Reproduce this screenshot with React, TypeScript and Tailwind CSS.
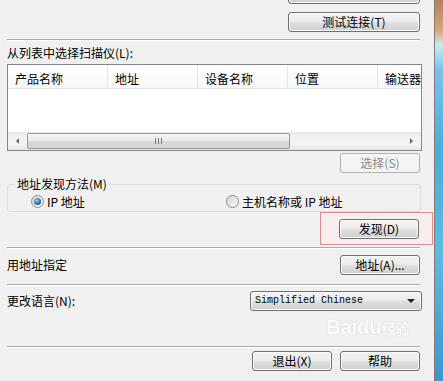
import React from 'react'

const face =
  'h-[20px] rounded-[3px] border border-[#707070] bg-[linear-gradient(#f3f3f3,#ececec_45%,#dedede_55%,#d0d0d0)] shadow-[inset_0_0_0_1px_#fbfbfb] text-black'

function Btn({ children, w = 'w-[80px]' }: { children: React.ReactNode; w?: string }) {
  return <div className={`flex items-center justify-center ${face} ${w}`}>{children}</div>
}

function Sep({ className = '' }: { className?: string }) {
  return <div className={`w-[413px] h-px bg-[#a9a9a9] shadow-[0_1px_0_#ffffff] ${className}`} />
}

function Radio({ checked }: { checked?: boolean }) {
  return (
    <div className="w-[13px] h-[13px] shrink-0 rounded-full border border-[#8a8d90] bg-[linear-gradient(135deg,#d6d6d6,#f8f8f8)] flex items-center justify-center">
      {checked && (
        <div className="w-[7px] h-[7px] rounded-full bg-[radial-gradient(circle_at_40%_35%,#8fd3f5,#1f6aa0_60%,#143f66)]" />
      )}
    </div>
  )
}

const cols = [
  { t: '产品名称', w: 'w-[100px]' },
  { t: '地址', w: 'w-[90px]' },
  { t: '设备名称', w: 'w-[90px]' },
  { t: '位置', w: 'w-[90px]' },
  { t: '输送器', w: 'w-[60px]' },
]

export default function App() {
  return (
    <div className="w-[443px] h-[381px] flex overflow-hidden bg-[#f0f0f0] text-[12px] leading-[16px] text-black font-['Noto_Sans_CJK_SC',sans-serif]">
      <div className="relative w-[434px] shrink-0 pl-[7px]">
        {/* top buttons */}
        <div className="flex justify-end w-[413px] -mt-[16px]">
          <Btn w="w-[132px]">{''}</Btn>
        </div>
        <div className="flex justify-end w-[413px] mt-[8px]">
          <Btn w="w-[132px]">测试连接(T)</Btn>
        </div>
        <Sep className="mt-[7px]" />

        <div className="mt-[5px] h-[16px]">从列表中选择扫描仪(L):</div>

        {/* list view */}
        <div className="mt-[3px] w-[415px] h-[87px] border border-[#828790] bg-white flex flex-col overflow-hidden">
          <div className="h-[24px] shrink-0 flex border-b border-[#e5e5e5] bg-[linear-gradient(#ffffff,#f7f8fa)]">
            {cols.map((c, i) => (
              <div
                key={i}
                className={`${c.w} shrink-0 pl-[7px] pt-[6px] whitespace-nowrap overflow-hidden ${i < 4 ? 'border-r border-[#e5e5e5]' : ''}`}
              >
                {c.t}
              </div>
            ))}
          </div>
          <div className="flex-1" />
          <div className="h-[18px] shrink-0 flex items-center bg-[linear-gradient(#e6e6e6,#f3f3f3_30%,#f3f3f3_70%,#e6e6e6)]">
            <div className="w-[19px] flex justify-center">
              <div className="w-0 h-0 border-y-[3px] border-y-transparent border-r-[3px] border-r-[#6a6a6a]" />
            </div>
            <div className="w-[263px] h-[16px] rounded-[2px] border border-[#979797] bg-[linear-gradient(#f6f6f6,#eaeaea_50%,#d9d9d9_50%,#d3d3d3)] flex items-center justify-center gap-[2px]">
              <div className="w-px h-[6px] bg-[#7a7a7a]" />
              <div className="w-px h-[6px] bg-[#7a7a7a]" />
              <div className="w-px h-[6px] bg-[#7a7a7a]" />
            </div>
            <div className="flex-1" />
            <div className="w-[19px] flex justify-center">
              <div className="w-0 h-0 border-y-[3px] border-y-transparent border-l-[3px] border-l-[#6a6a6a]" />
            </div>
          </div>
        </div>

        <div className="flex justify-end w-[413px] mt-[2px]">
          <div className="flex items-center justify-center w-[80px] h-[20px] rounded-[3px] border border-[#adb2b5] bg-[#f4f4f4] text-[#8a8a8a]">
            选择(S)
          </div>
        </div>

        {/* group box */}
        <fieldset className="mt-[3px] w-[414px] border border-[#d5dfe5] rounded-[3px] pb-[2px]">
          <legend className="ml-[7px] px-[2px] leading-[16px]">地址发现方法(M)</legend>
          <div className="h-[17px] pt-[2px] flex items-center">
            <div className="ml-[23px] w-[195px] flex items-center gap-[3px]">
              <Radio checked />
              <span>IP 地址</span>
            </div>
            <div className="flex items-center gap-[3px]">
              <Radio />
              <span>主机名称或 IP 地址</span>
            </div>
          </div>
        </fieldset>

        {/* highlighted discover button */}
        <div className="flex justify-end w-[413px]">
          <div className="-mr-[13px] w-[113px] h-[33px] border border-[#d88e8e] bg-[#f6eded] pl-[18px] pt-[6px]">
            <Btn>发现(D)</Btn>
          </div>
        </div>

        <Sep className="mt-[2px]" />

        <div className="mt-[7px] flex items-center justify-between w-[413px]">
          <span>用地址指定</span>
          <Btn>地址(A)...</Btn>
        </div>

        <Sep className="mt-[9px]" />

        <div className="mt-[6px] flex items-center justify-between w-[415px]">
          <span>更改语言(N):</span>
          <div className={`flex items-center justify-between pl-[4px] pr-[6px] w-[172px] ${face}`}>
            <span className="font-['Liberation_Mono',monospace] text-[10px]">Simplified Chinese</span>
            <div className="w-0 h-0 border-x-[4px] border-x-transparent border-t-[4px] border-t-[#222]" />
          </div>
        </div>

        <Sep className="mt-[35px]" />

        <div className="mt-[4px] flex justify-end gap-[8px] w-[413px]">
          <Btn>退出(X)</Btn>
          <Btn>帮助</Btn>
        </div>

        {/* watermark */}
        <div className="absolute left-[326px] top-[316px] leading-[22px] text-[20px] font-bold text-white opacity-80 [text-shadow:0_0_1px_#b8b8b8] font-['Liberation_Sans',sans-serif] pointer-events-none">
          Baidu<span className="text-[14px] font-['Noto_Sans_CJK_SC',sans-serif]">经验</span>
        </div>
      </div>
      <div className="w-px bg-[#7d7d7d]" />
      <div className="flex-1 bg-[linear-gradient(#b4805e,#d7a57c_30px,#cde9ef_45px,#74c6e8_70px,#48ace0_150px,#5cbbe6_250px,#3a97d3)]" />
    </div>
  )
}
